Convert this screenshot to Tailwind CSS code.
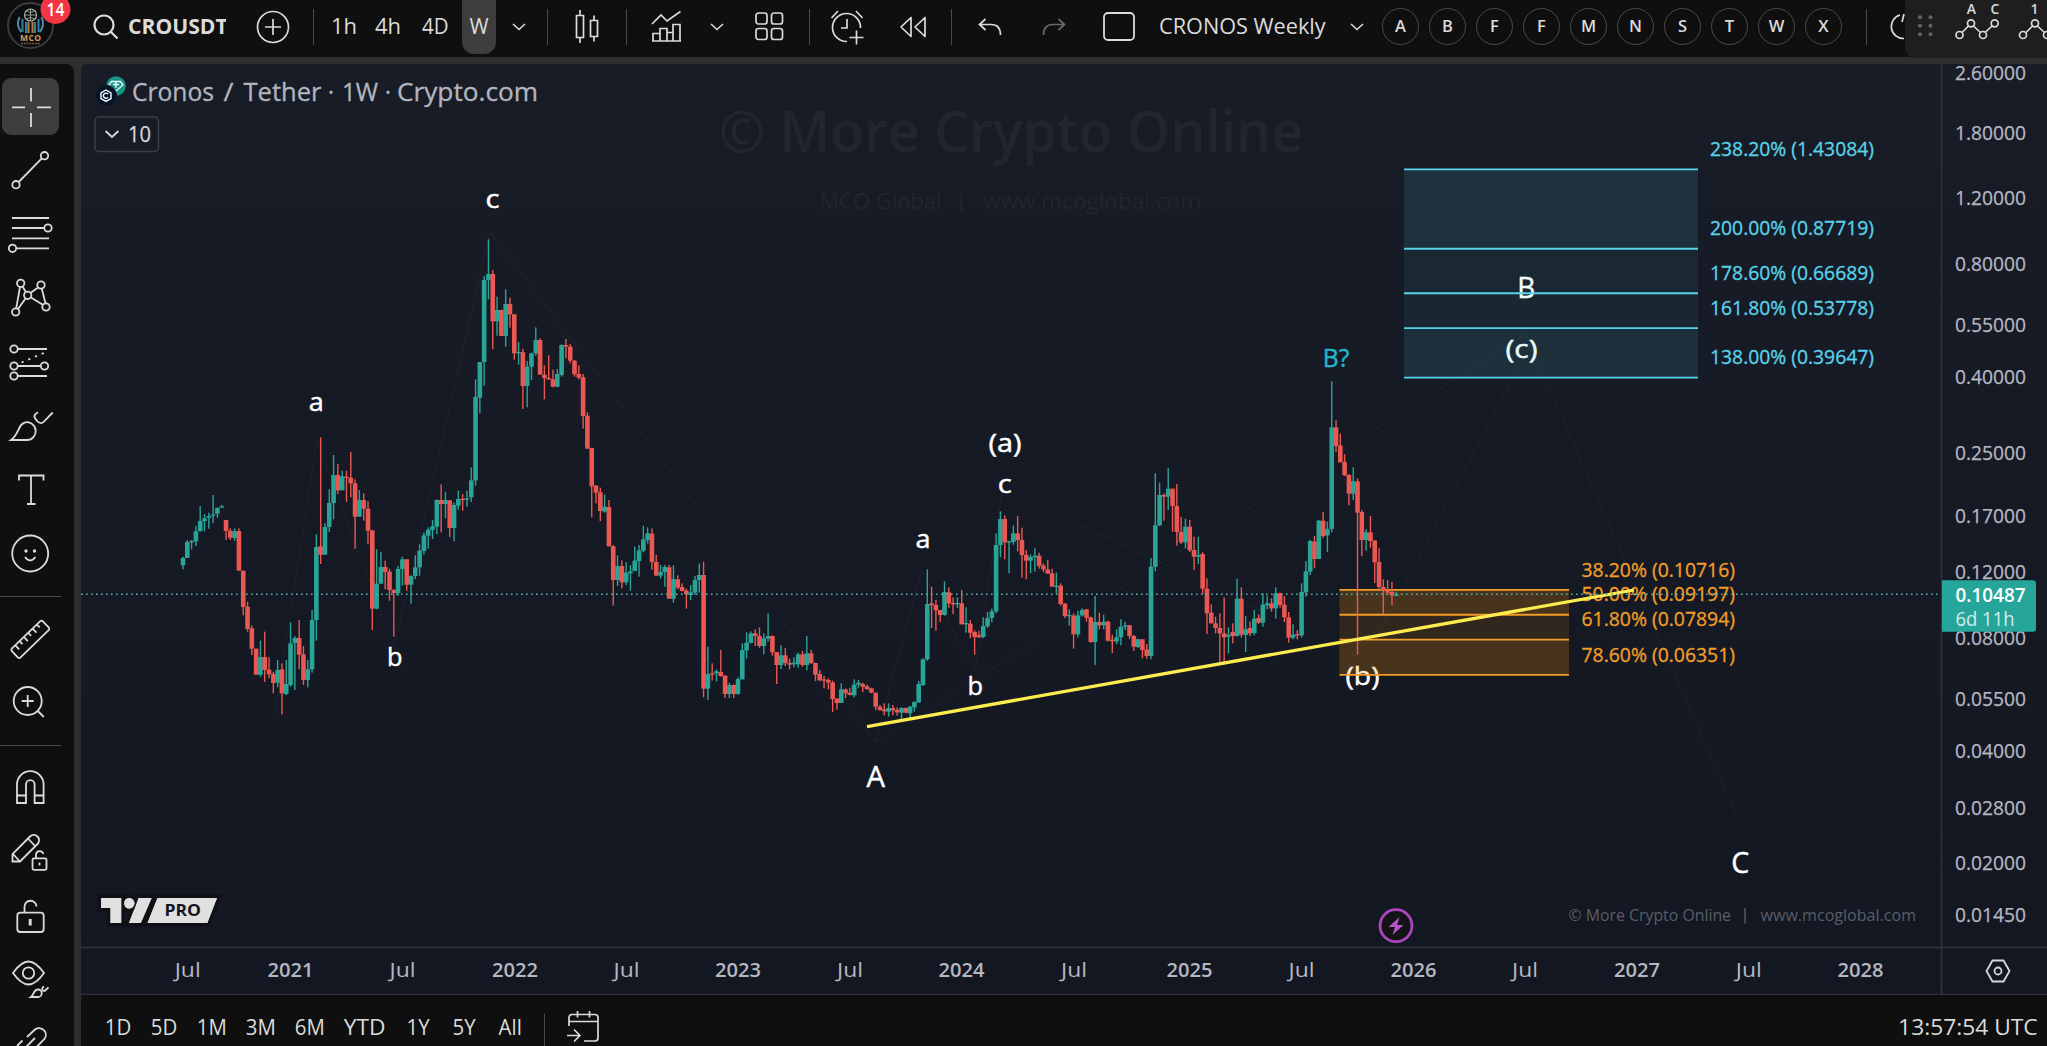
<!DOCTYPE html>
<html lang="en">
<head>
    <meta charset="UTF-8">
    <meta name="viewport" content="width=device-width, initial-scale=1.0">
    <title>CROUSDT 1W</title>
    <script src="https://cdn.jsdelivr.net/npm/@tailwindcss/browser@4"></script>
</head>
<body class="w-[2047px] h-[1046px] overflow-hidden bg-[#2e2e2e] text-[#dbdbdb] font-['Open_Sans','Noto_Sans',sans-serif] flex flex-col">

    <!-- Top toolbar -->
    <header class="relative h-[57px] shrink-0 bg-[#0f0f0f] flex items-start overflow-hidden">
        <div class="flex h-[53px] items-center text-[22px]">
            <!-- Account logo with notification badge -->
            <div class="relative w-[86px] h-[53px] shrink-0">
                <svg class="absolute left-0 top-0" width="86" height="53" fill="none">
                    <circle cx="30.5" cy="25.5" r="22.5" fill="#0b0c10" stroke="#3c3c3c" stroke-width="2"/>
                    <circle cx="30.5" cy="15" r="6" stroke="#b5bcae" stroke-width="1.1"/>
                    <path d="M24.5 15h12M30.5 9v12M26.5 11q4 3 8 0M26.5 19q4-3 8 0" stroke="#9aa89d" stroke-width=".9"/>
                    <path d="M19.500 17q-4 9 2 15M41.500 17q4 9-2 15" stroke="#4a8fae" stroke-width="2"/>
                    <path d="M22.500 19v13M26 22v11M35 22v11M38.500 19v13" stroke="#3b7d9c" stroke-width="2"/>
                    <path d="M28.500 22v11M32.500 22v11" stroke="#b98240" stroke-width="2"/>
                    <text x="30.5" y="40.500" text-anchor="middle" font-size="8.500" font-weight="700" fill="#d39a55" textLength="21">MCO</text>
                    <path d="M21 43.500h19" stroke="#7c5a35" stroke-width="1.300" stroke-dasharray="2 .8"/>
                    <circle cx="55.500" cy="9" r="15" fill="#f23645"/>
                    <text x="55.500" y="16" text-anchor="middle" font-size="17.500" font-weight="600" fill="#fff" textLength="18" lengthAdjust="spacingAndGlyphs">14</text>
                </svg>
            </div>
            <div class="w-[40px] shrink-0 flex justify-center">
                <svg width="26" height="26" fill="none" stroke="#dbdbdb" stroke-width="2.2"><circle cx="11" cy="11" r="9.5"/><path d="M18 18l6.500 6.500"/></svg>
            </div>
            <div class="w-[100px] pl-[2px] pb-[2px] shrink-0 overflow-hidden whitespace-nowrap font-bold"><span class="inline-block origin-left scale-x-[0.96]">CROUSDT</span></div>
            <div class="ml-[21px] w-[52px] shrink-0 flex justify-center">
                <svg width="34" height="34" fill="none" stroke="#dbdbdb" stroke-width="1.7"><circle cx="17" cy="17" r="15.500"/><path d="M17 9v16M9 17h16"/></svg>
            </div>
            <div class="ml-[14px] w-px h-9 bg-[#4a4a4a]"></div>
            <div class="ml-[7px] w-[46px] pb-[2px] text-center">1h</div>
            <div class="w-[42px] pb-[2px] text-center">4h</div>
            <div class="w-[52px] pb-[2px] text-center"><span class="inline-block scale-x-[0.93]">4D</span></div>
            <div class="ml-px w-[34px] h-[64px] -mt-[10px] pt-[8px] rounded-xl bg-[#3d3d3d] flex items-center justify-center"><span class="inline-block scale-x-[0.94]">W</span></div>
            <div class="w-[46px] flex justify-center"><svg width="14" height="8" fill="none" stroke="#dbdbdb" stroke-width="1.6"><path d="M1 1l6 5.500 6-5.500"/></svg></div>
            <div class="ml-[5px] w-px h-9 bg-[#4a4a4a]"></div>
            <div class="w-[78px] flex justify-center">
                <svg width="24" height="36" fill="none" stroke="#dbdbdb" stroke-width="1.700"><path d="M1.500 6.500h7v22h-7zM5 1v5.500M5 28.500V34M15.500 11.500h7v16h-7zM19 6.500v5M19 27.500v5"/></svg>
            </div>
            <div class="w-px h-9 bg-[#4a4a4a]"></div>
            <div class="ml-[13px] w-[53px] flex justify-center">
                <svg width="31" height="33" fill="none" stroke="#dbdbdb" stroke-width="1.700"><path d="M1 14L10 5l6 6L29.500 1.500M2 31v-7.500h7V31M9 24v-5.500h7V31M16 22.500h6M22 31V14.500h7V31M1 31h29"/></svg>
            </div>
            <div class="w-[48px] flex justify-center"><svg width="14" height="8" fill="none" stroke="#dbdbdb" stroke-width="1.600"><path d="M1 1l6 5.500 6-5.500"/></svg></div>
            <div class="w-[57px] flex justify-center">
                <svg width="29" height="29" fill="none" stroke="#dbdbdb" stroke-width="1.700"><rect x="1" y="1" width="11" height="11" rx="2.500"/><rect x="16.500" y="1" width="11" height="11" rx="2.500"/><rect x="1" y="16.500" width="11" height="11" rx="2.500"/><rect x="16.500" y="16.500" width="11" height="11" rx="2.500"/></svg>
            </div>
            <div class="ml-[11px] w-px h-9 bg-[#4a4a4a]"></div>
            <div class="w-[76px] flex justify-center">
                <svg width="36" height="36" fill="none" stroke="#dbdbdb" stroke-width="1.700"><path d="M17 32.500A14 14 0 1 1 30.500 19M17 10v9h-6M1.500 9l6.500-7M26 2l6.500 7M26.500 21.500v14M19.500 28.500h14"/></svg>
            </div>
            <div class="w-[54px] flex justify-center">
                <svg width="28" height="22" fill="none" stroke="#dbdbdb" stroke-width="1.700" stroke-linejoin="round"><path d="M12 1.500v19L2 11zM26 1.500v19L16 11z"/></svg>
            </div>
            <div class="ml-[11px] w-px h-9 bg-[#4a4a4a]"></div>
            <div class="w-[76px] flex justify-center">
                <svg width="24" height="18" fill="none" stroke="#dbdbdb" stroke-width="1.700"><path d="M7.500 1L1.500 6.500l6 5.500M1.500 6.500H13q9.500 0 9.500 10.500"/></svg>
            </div>
            <div class="w-[52px] flex justify-center">
                <svg width="24" height="18" fill="none" stroke="#6a6a6a" stroke-width="1.700"><path d="M16.500 1l6 5.500-6 5.500M22.500 6.500H11Q1.500 6.500 1.500 17"/></svg>
            </div>
            <div class="w-[77px] flex justify-center">
                <svg width="32" height="29" fill="none" stroke="#dbdbdb" stroke-width="1.800"><rect x="1" y="1" width="30" height="27" rx="4"/></svg>
            </div>
            <div class="w-[172px] pl-[2px] pb-[2px] whitespace-nowrap font-medium"><span class="inline-block origin-left scale-x-[0.985]">CRONOS Weekly</span></div>
            <div class="w-[48px] pl-[7px] flex justify-center"><svg width="14" height="8" fill="none" stroke="#dbdbdb" stroke-width="1.600"><path d="M1 1l6 5.500 6-5.500"/></svg></div>
            <!-- Favourite layouts -->
            <div class="flex -mt-px font-semibold text-[16.5px]">
                <div class="w-[47px] flex justify-center"><span class="size-[37px] rounded-full border-[1.5px] border-[#4a4a4a] flex items-center justify-center">A</span></div>
                <div class="w-[47px] flex justify-center"><span class="size-[37px] rounded-full border-[1.5px] border-[#4a4a4a] flex items-center justify-center">B</span></div>
                <div class="w-[47px] flex justify-center"><span class="size-[37px] rounded-full border-[1.5px] border-[#4a4a4a] flex items-center justify-center">F</span></div>
                <div class="w-[47px] flex justify-center"><span class="size-[37px] rounded-full border-[1.5px] border-[#4a4a4a] flex items-center justify-center">F</span></div>
                <div class="w-[47px] flex justify-center"><span class="size-[37px] rounded-full border-[1.5px] border-[#4a4a4a] flex items-center justify-center">M</span></div>
                <div class="w-[47px] flex justify-center"><span class="size-[37px] rounded-full border-[1.5px] border-[#4a4a4a] flex items-center justify-center">N</span></div>
                <div class="w-[47px] flex justify-center"><span class="size-[37px] rounded-full border-[1.5px] border-[#4a4a4a] flex items-center justify-center">S</span></div>
                <div class="w-[47px] flex justify-center"><span class="size-[37px] rounded-full border-[1.5px] border-[#4a4a4a] flex items-center justify-center">T</span></div>
                <div class="w-[47px] flex justify-center"><span class="size-[37px] rounded-full border-[1.5px] border-[#4a4a4a] flex items-center justify-center">W</span></div>
                <div class="w-[47px] flex justify-center"><span class="size-[37px] rounded-full border-[1.5px] border-[#4a4a4a] flex items-center justify-center">X</span></div>
            </div>
            <div class="ml-[19px] w-px h-9 bg-[#4a4a4a]"></div>
            <svg class="ml-[23px]" width="24" height="28" fill="none" stroke="#dbdbdb" stroke-width="1.700"><path d="M10 2A12 12 0 0 0 14 25.500M12 9l2-8"/></svg>
        </div>
    </header>

    <!-- Floating favourite drawing tools -->
    <div class="absolute right-0 top-0 w-[142px] h-[58px] rounded-bl-[10px] bg-[#1e1e1e] z-10">
        <svg width="142" height="58" viewBox="1905 0 142 58" fill="none" stroke="#dbdbdb" stroke-width="1.700">
            <g fill="#636363" stroke="none">
                <circle cx="1920" cy="17.300" r="2"/><circle cx="1930.500" cy="17.300" r="2"/>
                <circle cx="1920" cy="25.700" r="2"/><circle cx="1930.500" cy="25.700" r="2"/>
                <circle cx="1920" cy="34.300" r="2"/><circle cx="1930.500" cy="34.300" r="2"/>
            </g>
            <path d="M1962 32.500l6.500-6.500M1973.500 26l7 6.500M1985 32.500l7-6.500M2026 32.500l6.500-6.500M2037.500 26l7 6.500"/>
            <circle cx="1959.500" cy="35" r="3.500"/><circle cx="1971" cy="23.300" r="3.500"/><circle cx="1983" cy="35" r="3.500"/><circle cx="1994.700" cy="23.300" r="3.500"/>
            <circle cx="2023" cy="35" r="3.500"/><circle cx="2035" cy="23.300" r="3.500"/><circle cx="2047" cy="35" r="3.500"/>
            <g fill="#dbdbdb" stroke="none" font-size="14" font-weight="600" text-anchor="middle">
                <text x="1971.500" y="14">A</text><text x="1995" y="14">C</text><text x="2034.500" y="14">1</text>
            </g>
        </svg>
    </div>

    <div class="mt-[7px] flex flex-1 min-h-0">
        <!-- Drawing tools -->
        <aside class="w-[74px] shrink-0 pt-[10px] bg-[#0f0f0f] rounded-tr-lg overflow-hidden [&_svg]:block [&_svg]:w-[60px] [&_svg]:h-[64px] [&_svg]:fill-none [&_svg]:stroke-[#dbdbdb] [&_svg]:stroke-[1.800]">
            <svg><rect x="2" y="4" width="57" height="57" rx="9" fill="#3d3d3d" stroke="none"/><path d="M31 14v13.500M31 39v14M12 33.300h13M37 33.300h14"/></svg>
            <svg><circle cx="44.500" cy="17.700" r="3.700"/><circle cx="16" cy="46.700" r="3.700"/><path d="M18.700 44L41.800 20.400"/></svg>
            <svg><path d="M12 16h37M12 26h32M12 36.300h37M16.500 46.300H49"/><circle cx="48" cy="26" r="3.700"/><circle cx="12.500" cy="46.300" r="3.700"/></svg>
            <svg><path d="M16.200 42.300L20 21M22.500 20.500l3.500 5.700M31 31.500l11.800 7.300M45.500 37.300L41.800 22.700M38 21.500L30.500 27M25.500 32.500L18 43"/><circle cx="20.700" cy="17.300" r="3.700"/><circle cx="41" cy="19" r="3.700"/><circle cx="27.700" cy="29.300" r="3.700"/><circle cx="46" cy="41" r="3.700"/><circle cx="15.700" cy="46" r="3.700"/></svg>
            <svg><path d="M17.700 19H47M17.700 36h23M17.700 46H47"/><path d="M21.500 32.500L46 22" stroke-dasharray="2.300 5"/><circle cx="14" cy="19" r="3.700"/><circle cx="14" cy="36" r="3.700"/><circle cx="44.500" cy="36" r="3.700"/><circle cx="14" cy="46" r="3.700"/></svg>
            <svg><path d="M11 46h16a8.900 8.900 0 1 0-1.500-17.700C18 29.500 19.500 40 11 46z"/><path d="M38 18.300c-5 2.800-4.500 5-.5 9 3 2.800 4.500 2.300 6 .7l9.200-9.500"/></svg>
            <svg><path d="M19 22.500v-5h24.500v5M31 17.500V46M27 46h8.500"/></svg>
            <svg><circle cx="30.200" cy="31.500" r="18"/><circle cx="26" cy="29" r="1.700" fill="#dbdbdb" stroke="none"/><circle cx="34.500" cy="29" r="1.700" fill="#dbdbdb" stroke="none"/><path d="M25 35q5.200 7 10.400 0"/></svg>
            <div class="mt-[10px] w-[61px] h-px bg-[#4a4a4a]"></div>
            <svg class="mt-[10px]"><g transform="translate(30.300 32.300) rotate(-44)"><rect x="-21.500" y="-6.200" width="43" height="12.400" rx="2"/><path d="M-15-6v5.500M-9-6v4M-3-6v5.500M3-6v4M9-6v5.500M15-6v4"/></g></svg>
            <svg><circle cx="27.700" cy="30" r="14"/><path d="M27.700 24v12M21.700 30h12M37.800 40l6 6"/></svg>
            <div class="mt-[10px] w-[61px] h-px bg-[#4a4a4a]"></div>
            <svg class="mt-[10px]"><path d="M17 47V28.500a13.300 13.300 0 0 1 26.600 0V47h-9V28.500a4.300 4.300 0 0 0-8.600 0V47zM17 39.500h9M34.600 39.500h9"/></svg>
            <svg><path d="M12.500 41.500V34L30 16.500a5.200 5.200 0 0 1 7.500 7.500L20 41.500zM13 34l7 7.500M28 18.500l7 7.500"/><rect x="32.500" y="38.300" width="14" height="11.500" rx="1.500"/><path d="M36 38v-3.500a3.700 3.700 0 0 1 7.300-.5M39.500 42.500v3"/></svg>
            <svg><rect x="17.300" y="28.700" width="26.400" height="19.300" rx="3"/><path d="M24.500 28.500V23a6 6 0 0 1 12-.5"/><rect x="28.700" y="35" width="3" height="6.500" fill="#dbdbdb" stroke="none"/></svg>
            <svg><path d="M13 25c6-8.500 10.500-11.500 15.500-11.500S38 16.500 44 25c-6 8.500-10.500 11.500-15.500 11.500S19 33.500 13 25z"/><circle cx="28.500" cy="25" r="5.700"/><path d="M31 49c3-2 2.500-7.500 7-7.500a3.700 3.700 0 0 1 0 7.500zM44 38.500c-3 1.500-2 4.500.5 4.500l4-3.500"/></svg>
            <svg><path d="M27 25l8-7.500a6.800 6.800 0 0 1 9.500 9.500L36 35.500M17 34l5.500-5.500M26 35l9-9"/></svg>
        </aside>

        <div class="ml-[7px] flex-1 flex flex-col min-w-0">
            <!-- Chart pane with price and time scales -->
            <main class="h-[931px] shrink-0 rounded-tl-md overflow-hidden bg-linear-to-b from-[#181c27] to-[#131722]">
                <svg id="chart" class="block" width="1966" height="931" viewBox="81 64 1966 931" fill="none">
                    <g id="watermark" fill="#20262f"></g>
                    <g stroke="#fff" stroke-opacity=".03" stroke-width="1.300">
                        <path d="M274 720L317 440L394 648L490 232L875 742L922 570L975 672L1003 488L1365 660"/>
                        <path d="M875 742L1526 335L1740 823"/>
                        <path d="M1365 660L1530 345"/>
                    </g>
                    <g id="wave-labels" fill="#fff" text-anchor="middle" font-weight="500"></g>
                    <g id="fibs"></g>
                    <g id="candles"></g>
                    <path d="M867 726.700L1634 590" stroke="#fdec4e" stroke-width="3.300"/>
                    <path d="M81 594.300H1941" stroke="#55b5ab" stroke-width="1.500" stroke-dasharray="1.600 3.400"/>
                    <path d="M1941.500 64V995M81 947.500H2047" stroke="#30343e" stroke-width="1.500"/>
                    <path d="M81 994.500H2047" stroke="#303238" stroke-width="1.500"/>
                    <g id="price-scale" fill="#b5b8c1" stroke="#b5b8c1" stroke-width=".25" font-size="19.500"></g>
                    <g id="time-scale" fill="#b5b8c1" font-size="19.500" text-anchor="middle"></g>

                    <!-- Last price -->
                    <path d="M1942 580.300H2033a3 3 0 0 1 3 3v45.400a3 3 0 0 1-3 3H1942z" fill="#26a69a"/>
                    <g fill="#fff" font-size="19.500">
                        <text x="1955.500" y="602.300" font-weight="600" textLength="70" lengthAdjust="spacingAndGlyphs">0.10487</text>
                        <text x="1955.500" y="625.700" fill="#d4edea" textLength="59" lengthAdjust="spacingAndGlyphs">6d 11h</text>
                    </g>

                    <!-- Legend -->
                    <circle cx="116" cy="86" r="9.800" fill="#1a9389"/>
                    <path d="M111.500 81.500h9l2.500 3.500-7 6-7-6zM113 84.500h6M116 82v6" stroke="#e6fffb" stroke-width="1.300"/>
                    <circle cx="106" cy="95.700" r="11" fill="#181c27"/>
                    <circle cx="106" cy="95.700" r="9.800" fill="#03132a"/>
                    <path d="M106 90l5 2.900v5.600l-5 2.900-5-2.900v-5.600zM108 94a2.600 2.600 0 1 0 0 3.400" stroke="#fff" stroke-width="1.400"/>
                    <g id="legend" fill="#b2b5be" stroke="#b2b5be" stroke-width=".3" font-size="24.800"></g>
                    <rect x="95" y="117" width="63.500" height="34.500" rx="4" stroke="#3c3f4a" stroke-width="1.500"/>
                    <path d="M105.500 131l6.500 6 6.500-6" stroke="#d5d7dd" stroke-width="1.900"/>
                    <text x="128" y="141.500" font-size="21" fill="#d5d7dd" stroke="#d5d7dd" stroke-width=".25" textLength="23" lengthAdjust="spacingAndGlyphs">10</text>

                    <!-- Logo -->
                    <g fill="#e0e0e0" stroke="#0f1117" stroke-width="7" paint-order="stroke">
                        <path d="M157.500 898H217l-9.700 25H147.500z"/>
                        <path d="M138.600 898h13l-10.800 25H129z"/>
                        <circle cx="129.200" cy="903.200" r="5.200"/>
                        <path d="M101 898h20.200v25h-10.700v-15H101z"/>
                    </g>
                    <g fill="#e0e0e0"><path d="M157.500 898H217l-9.700 25H147.500zM138.600 898h13l-10.800 25H129zM101 898h20.200v25h-10.700v-15H101z"/><circle cx="129.200" cy="903.200" r="5.200"/></g>
                    <text x="164.500" y="916.300" font-size="15.500" font-weight="700" fill="#12151e" textLength="36.500" lengthAdjust="spacingAndGlyphs">PRO</text>

                    <!-- Event marker -->
                    <circle cx="1396" cy="925.700" r="16" fill="#131318" stroke="#ab47bc" stroke-width="2.800"/>
                    <path d="M1399.500 917L1388.500 927H1395L1392.500 935L1403.500 925H1397z" fill="#b457c6"/>

                    <!-- Scale settings -->
                    <path d="M1992.500 960.500h11l6 10.500-6 10.500h-11l-6-10.500z" stroke="#d5d7dd" stroke-width="1.800"/>
                    <circle cx="1998" cy="971" r="3.500" stroke="#d5d7dd" stroke-width="1.800"/>
                </svg>
            </main>

            <!-- Date ranges -->
            <footer class="flex-1 bg-[#0f0f0f] flex items-start text-[21.5px]">
                <div class="flex items-center h-[64px] pl-[23px] text-center whitespace-nowrap [&>span]:shrink-0 [&_b]:inline-block [&_b]:font-normal [&_b]:scale-x-[0.95]">
                    <span class="w-[26px]"><b>1D</b></span>
                    <span class="ml-[20px] w-[26px]"><b>5D</b></span>
                    <span class="ml-[20px] w-[31px]"><b>1M</b></span>
                    <span class="ml-[18px] w-[31px]"><b>3M</b></span>
                    <span class="ml-[18px] w-[31px]"><b>6M</b></span>
                    <span class="ml-[19px] w-[41px]"><span class="inline-block scale-x-[1.06]">YTD</span></span>
                    <span class="ml-[20px] w-[26px]"><b>1Y</b></span>
                    <span class="ml-[20px] w-[26px]"><b>5Y</b></span>
                    <span class="ml-[19px] w-[28px]"><b>All</b></span>
                    <div class="ml-[20px] w-px h-10 mt-[14px] bg-[#4a4a4a]"></div>
                    <svg class="ml-[21px]" width="34" height="34" fill="none" stroke="#dbdbdb" stroke-width="1.700"><path d="M3 16V7.500a3 3 0 0 1 3-3h23a3 3 0 0 1 3 3V28a3 3 0 0 1-3 3H18M3 11.500h29M11.500 1v6.500M23.500 1v6.500M1 25.500h12.500M8 19.500l6 6-6 6"/></svg>
                </div>
                <div class="ml-auto h-[64px] pr-[9px] flex items-center"><span class="inline-block origin-right scale-x-[1.06]">13:57:54 UTC</span></div>
            </footer>
        </div>
    </div>

    <script>
        const NS = 'http://www.w3.org/2000/svg';
        const CANDLE_STEP = 4.3023;
        const FIRST_CANDLE_X = 183;

        function add(parentId, tag, attrs, text) {
            const el = document.createElementNS(NS, tag);
            for (const key in attrs) el.setAttribute(key, attrs[key]);
            if (text) el.textContent = text;
            document.getElementById(parentId).appendChild(el);
            return el;
        }

        // Text stretched or squeezed to an exact width
        function label(parentId, text, x, y, width, extra) {
            add(parentId, 'text', Object.assign({ x, y, textLength: width, lengthAdjust: 'spacingAndGlyphs' }, extra), text);
        }

        // Logarithmic price scale
        function yFor(price) {
            return 73 + 162.3 * Math.log(2.6 / price);
        }

        // --- Watermarks ---
        label('watermark', '© More Crypto Online', 719, 151.7, 584, { 'font-size': 58.5, 'font-weight': 600 });
        label('watermark', 'MCO Global', 819.5, 209.3, 122, { 'font-size': 21.5, 'font-weight': 500 });
        add('watermark', 'path', { d: 'M961.6 193v20', stroke: '#20262f', 'stroke-width': 2 });
        label('watermark', 'www.mcoglobal.com', 983, 209.3, 218, { 'font-size': 21.5, 'font-weight': 500 });
        label('watermark', '© More Crypto Online', 1568.5, 921, 162.5, { 'font-size': 16, fill: '#595d67' });
        add('watermark', 'path', { d: 'M1745 908v15.500', stroke: '#595d67', 'stroke-width': 1.4 });
        label('watermark', 'www.mcoglobal.com', 1760.5, 921, 155.5, { 'font-size': 16, fill: '#595d67' });

        // --- Legend ---
        [['Cronos', 132, 82], ['/', 223.5, 10], ['Tether', 243.5, 78], ['·', 328, 6], ['1W', 342, 36], ['·', 385, 6], ['Crypto.com', 397, 141]]
            .forEach(([t, x, w]) => label('legend', t, x, 100.5, w));

        // --- Price scale ---
        [2.6, 1.8, 1.2, 0.8, 0.55, 0.4, 0.25, 0.17, 0.12, 0.08, 0.055, 0.04, 0.028, 0.02, 0.0145]
            .forEach(p => label('price-scale', p.toFixed(5), 1955, yFor(p) + 7, 71));

        // --- Time scale ---
        [187.7, 402.5, 626.5, 850, 1074, 1301.5, 1525, 1748.8].forEach(x => label('time-scale', 'Jul', x, 977.2, 26));
        [290.4, 515, 738, 961.5, 1189.5, 1413.4, 1637, 1860.6]
            .forEach((x, i) => label('time-scale', String(2021 + i), x, 977.2, 46, { 'font-weight': 600 }));

        // --- Wave labels: text, centre x, baseline, width, size, colour ---
        [
            ['a', 316.3, 411, 15, 25.5], ['b', 394.7, 666, 15.5, 25], ['c', 492.5, 207.7, 14, 25.5],
            ['A', 875.7, 787.3, 18.5, 29], ['a', 923, 547.7, 15, 25.5], ['b', 975.3, 695, 15.5, 25],
            ['c', 1004.7, 492.7, 14, 25.5], ['(a)', 1005, 452.3, 33, 25], ['B?', 1336, 366.7, 26.5, 25, '#20b6cf'],
            ['(b)', 1362.5, 685.3, 34, 25], ['(c)', 1521.5, 358.3, 32, 25], ['B', 1526.3, 297.7, 18, 29],
            ['C', 1740.3, 873.3, 18, 29]
        ].forEach(([t, x, y, w, s, c]) => label('wave-labels', t, x, y, w, { 'font-size': s, fill: c || '#fff', stroke: c || '#fff', 'stroke-width': 0.45 }));

        // --- Fibonacci levels ---
        function drawFib(levels, x1, x2, labelX, labelWidth, stroke, fills) {
            const levelY = level => yFor(level[1]) - 0.6;
            levels.slice(1).forEach((level, i) => {
                const top = levelY(levels[i]);
                add('fibs', 'rect', { x: x1, y: top, width: x2 - x1, height: levelY(level) - top, fill: fills[i] });
            });
            levels.forEach(level => {
                const y = levelY(level);
                add('fibs', 'path', { d: `M${x1} ${y}H${x2}`, stroke, 'stroke-width': 1.8 });
                label('fibs', `${level[0]}% (${level[1].toFixed(5)})`, labelX, y - 13.3, labelWidth, { fill: stroke, stroke, 'stroke-width': 0.3, 'font-size': 19.5 });
            });
        }
        drawFib([['238.20', 1.43084], ['200.00', 0.87719], ['178.60', 0.66689], ['161.80', 0.53778], ['138.00', 0.39647]],
            1404, 1698, 1710, 164, '#58d3ea', ['#4dd0e11f', '#4dd0e112', '#4dd0e112', '#4dd0e11f']);
        drawFib([['38.20', 0.10716], ['50.00', 0.09197], ['61.80', 0.07894], ['78.60', 0.06351]],
            1339.5, 1569, 1581.5, 153.5, '#f29d28', ['#ff980038', '#ff98001f', '#ff980038']);

        // --- Candles: direction, high, body top, body bottom, low (thirds of a pixel below y) ---
        const segments = [
            { y: 220, rows: `u 1010 1014 1036 1048,u 960 966 1014 1014,u 960 963 966 988,u 918 934 964 978,u 858 903 934 934,u 882 895 903 934,u 878 888 893 926,u 825 883 887 910,u 862 864 881 893,u 855 859 863 863,d 900 900 933 960,d 925 932 953 960,u 925 933 954 962,d 925 933 1052 1052,d 1052 1052 1161 1186,d 1145 1160 1227 1235,d 1217 1225 1286 1305,d 1286 1286 1364 1364,u 1262 1311 1364 1370,d 1235 1311 1350 1386,
                d 1312 1349 1363 1375,d 1355 1362 1389 1420,u 1320 1350 1388 1402,d 1330 1348 1420 1483,u 1320 1392 1422 1425,u 1207 1270 1395 1400,u 1248 1254 1269 1410,d 1200 1254 1304 1348,d 1278 1303 1380 1395,u 1320 1348 1380 1402,u 1170 1200 1348 1358,u 943 981 1200 1262,d 652 979 1004 1032,u 910 921 1004 1004,u 808 849 921 936,u 705 765 849 898,d 732 765 811 822,u 752 769 811 811,d 752 770 774 846,d 696 773 790 832,
                d 778 790 890 986,u 810 840 890 890,d 820 840 866 902,d 843 866 932 973,d 930 931 1166 1230,u 988 1091 1166 1168,u 996 1041 1091 1091,d 1022 1041 1056 1108,d 1046 1055 1110 1142,d 1106 1110 1119 1250,u 1038 1047 1119 1127,u 1010 1018 1047 1097,d 1018 1018 1094 1112,u 1066 1068 1094 1151,u 1006 1042 1068 1077,u 973 992 1042 1067,u 937 946 993 1004,u 922 929 947 986,u 900 919 930 957,u 838 840 920 943,
                d 793 840 852 937,u 815 840 852 895,d 840 841 924 951,u 848 855 924 964,u 812 837 857 869,d 822 836 840 872,u 812 835 839 860,u 742 781 832 846,u 478 531 781 797,u 426 426 533 580,u 168 180 426 497,u 58 162 180 238,d 150 162 304 388,u 230 270 304 347,d 270 270 348 348,u 208 252 348 380,d 233 252 283 323,d 283 283 400 419,u 366 396 400 434,d 386 397 498 567,
                u 423 440 498 562,u 398 400 440 480,u 322 360 400 407,d 355 360 464 464,d 436 464 474 538,d 406 474 478 480,d 449 478 500 502,u 447 462 500 502,u 373 375 465 470` },
            { y: 320, rows: `d 57 75 80 115,d 72 80 122 130,d 120 122 163 170,d 136 162 173 178,d 162 172 288 326,d 277 287 386 386,d 383 384 499 592,d 495 497 518 550,d 503 517 573 603,u 524 560 575 578,d 540 561 679 679,d 675 679 780 857,u 706 738 780 798,d 721 738 787 805,u 726 758 787 795,u 735 754 760 812,u 680 722 753 753,u 675 691 723 770,u 617 658 692 697,u 622 640 660 671,
                d 625 641 726 749,d 705 726 767 767,u 735 756 767 775,u 735 741 756 800,d 735 742 836 836,u 736 777 836 848,d 766 778 803 808,d 790 801 813 814,d 806 812 823 866,u 795 817 825 840,u 768 780 818 825,u 730 765 780 818,d 725 765 1106 1132,u 980 1062 1106 1140,d 1030 1060 1063 1082,u 1048 1054 1060 1085,d 990 1056 1068 1070,d 1065 1067 1122 1134,u 1088 1095 1122 1134,d 1093 1095 1122 1134,
                u 1072 1077 1122 1124,u 970 990 1078 1078,u 937 968 991 1015,u 934 940 969 970,d 928 940 948 978,d 922 948 978 983,u 940 955 978 1003,u 880 948 956 965,d 946 948 997 1007,d 996 996 1035 1092,u 976 1006 1035 1047,d 984 1006 1029 1038,d 1016 1029 1034 1048,u 1012 1028 1033 1042,u 998 1003 1033 1043,d 993 1003 1035 1040,u 948 1000 1035 1051,d 990 1000 1029 1032,d 1028 1029 1064 1083,d 1050 1062 1081 1083,
                d 1068 1078 1082 1105,d 1075 1080 1087 1108,d 1082 1087 1137 1176,d 1134 1136 1149 1169,u 1090 1108 1149 1149,d 1106 1108 1120 1135,d 1103 1118 1125 1126,u 1078 1094 1126 1132,u 1080 1088 1094 1103,d 1088 1092 1100 1116,d 1094 1099 1107 1110,d 1103 1105 1118 1120,d 1118 1118 1160 1170,d 1155 1160 1170 1172,d 1150 1168 1174 1186,u 1150 1164 1175 1190,d 1155 1164 1171 1186,d 1162 1170 1177 1187,u 1162 1164 1178 1200,d 1163 1164 1178 1180,
                u 1158 1160 1180 1194,u 1144 1146 1162 1175,u 1083 1092 1147 1148,u 1015 1018 1095 1098,u 748 852 1018 1022` },
            { y: 420, rows: `d 500 550 556 624,d 540 555 571 632,d 570 570 585 606,u 484 516 585 587,d 502 517 550 563,d 532 549 553 582,u 532 549 553 564,d 510 550 613 613,u 562 609 613 638,d 600 611 638 655,d 631 636 651 704,d 632 646 652 653,u 592 618 651 655,u 576 594 619 624,u 566 574 594 607,u 340 375 574 580,u 274 297 375 412,d 286 297 367 418,u 362 364 368 460,u 317 340 366 374,
                d 288 340 360 394,d 323 360 405 473,d 390 405 422 478,u 403 411 422 460,u 385 407 412 455,d 398 407 438 446,d 430 437 448 457,d 420 448 461 461,d 446 460 500 500,u 458 497 500 520,d 490 497 552 557,d 549 551 588 594,u 568 585 588 617,d 580 587 643 686,u 572 586 643 652,u 565 570 586 590,d 567 568 593 605,d 590 592 666 668,u 528 606 666 735,d 578 606 616 628,
                u 584 605 616 628,d 602 605 662 664,d 644 659 664 699,u 628 652 664 672,u 598 620 652 676,u 606 616 620 630,d 615 616 648 657,d 645 648 680 693,u 656 658 681 684,d 657 658 690 715,d 672 688 708 716,u 414 440 708 718,u 160 316 440 454,u 188 225 316 318,d 220 225 230 302,u 144 206 230 270,d 206 206 258 335,d 192 258 336 377` },
            { y: 340, rows: `d 530 576 607 612,u 536 560 607 625,d 540 560 631 636,d 590 630 650 690,u 590 645 650 672,d 637 642 746 762,d 715 746 820 882,d 793 818 850 850,d 830 850 864 880,d 820 864 880 970,d 773 880 892 970,u 862 884 890 940,d 850 876 888 910,u 716 776 888 890,d 742 776 884 893,u 828 868 885 936,d 845 864 880 888,u 810 836 879 886,d 823 834 848 852,u 760 794 848 860,
                u 767 790 796 808,d 775 790 805 815,u 742 760 805 836,d 758 760 795 803,d 768 794 832 846,d 816 832 893 908,u 853 884 893 898,d 870 882 886 898,u 730 756 886 893,u 663 694 757 770,u 600 603 695 705,d 588 605 657 685,u 540 542 657 657,d 516 542 588 594,u 545 567 586 636,u 124 262 567 577,d 241 262 318 336,d 281 316 367 367,d 343 366 406 408,d 403 405 461 496,
                u 382 424 461 480,d 415 424 518 944,d 510 516 600 648,u 568 577 600 632,d 528 577 603 623,d 600 602 667 729,d 625 666 741 750,d 718 741 753 822,d 720 752 758 765,d 726 756 766 795,u 755 764 768 768` }
        ];
        let index = 0;
        segments.forEach(segment => {
            segment.rows.split(',').forEach(row => {
                const [dir, ...values] = row.trim().split(' ');
                const [high, top, bottom, low] = values.map(v => segment.y + v / 3);
                const x = FIRST_CANDLE_X + CANDLE_STEP * index++;
                const fill = dir === 'u' ? '#2ba498' : '#e95852';
                add('candles', 'rect', { x: x - 0.7, y: high, width: 1.4, height: low - high, fill });
                add('candles', 'rect', { x: x - 2.3, y: top, width: 4.6, height: Math.max(bottom - top, 1.3), fill });
            });
        });
    </script>
</body>
</html>
